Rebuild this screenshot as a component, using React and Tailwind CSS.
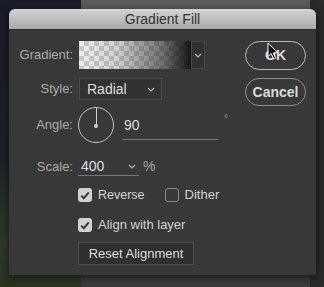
import React from "react";

function Chevron({ className = "" }) {
  return (
    <svg width="8" height="5" viewBox="0 0 8 5" className={className}>
      <path d="M1 1 L4 4 L7 1" fill="none" stroke="#b5b5b5" strokeWidth="1.2" />
    </svg>
  );
}

function CheckBox({ checked }) {
  return checked ? (
    <div className="w-[14px] h-[14px] rounded-[3px] bg-[#d2d2d2] flex items-center justify-center">
      <svg width="10" height="9" viewBox="0 0 10 9">
        <path d="M1.2 4.6 L3.8 7.2 L8.8 1.4" fill="none" stroke="#3a3a3a" strokeWidth="2" />
      </svg>
    </div>
  ) : (
    <div className="w-[14px] h-[14px] rounded-[3px] border border-[#8a8a8a]" />
  );
}

export default function App() {
  return (
    <div
      className="relative w-[324px] h-[287px] overflow-hidden flex"
      style={{ fontFamily: '"Liberation Sans", Arial, sans-serif' }}
    >
      {/* background desktop */}
      <div className="w-[81px] h-full bg-[linear-gradient(to_bottom,#1b1c29_0%,#1e2127_55%,#2f3a28_85%,#2a3322_100%)]" />
      <div className="w-[229px] h-full flex flex-col">
        <div className="h-[40px] bg-[#5b5b5b]" />
        <div className="flex-1 bg-[#3b3b3b]" />
      </div>
      <div className="flex-1 h-full bg-[#2a2a2a]" />

      {/* dialog */}
      <div className="absolute left-[9px] top-[9px] w-[307px] h-[266px] rounded-t-[6px] bg-[#383838] shadow-[0_2px_8px_rgba(0,0,0,0.6)] flex flex-col overflow-hidden">
        <div className="h-[21px] bg-[linear-gradient(to_bottom,#d4d4d4,#a9a9a9)] flex items-center justify-center text-[14px] text-[#333] border-b border-[#2e2e2e]">
          Gradient Fill
        </div>
        <div className="flex flex-1">
          {/* form */}
          <div className="flex flex-col flex-1 text-[13px]">
            {/* gradient */}
            <div className="flex items-center mt-[11px] h-[28px]">
              <div className="w-[64px] text-right text-[#ababab]">Gradient:</div>
              <div className="ml-[6px] w-[112px] h-[28px] bg-[linear-gradient(to_right,rgba(28,28,28,0)_0%,rgba(28,28,28,0.15)_35%,rgba(28,28,28,0.6)_75%,rgba(15,15,15,0.97)_100%),repeating-conic-gradient(#c9c9c9_0_25%,#efefef_0_50%)] bg-[length:100%_100%,10px_10px]" />
              <div className="w-[14px] h-[28px] border border-[#4a4a4a] bg-[#303030] flex items-center justify-center">
                <Chevron />
              </div>
            </div>
            {/* style */}
            <div className="flex items-center mt-[9px] h-[22px]">
              <div className="w-[64px] text-right text-[#ababab]">Style:</div>
              <div className="ml-[6px] w-[83px] h-[22px] border border-[#4b4b4b] bg-[#323232] flex items-center justify-between pl-[7px] pr-[6px] text-[14px] text-[#dedede]">
                <span>Radial</span>
                <Chevron />
              </div>
            </div>
            {/* angle */}
            <div className="flex items-center mt-[8px] h-[34px]">
              <div className="w-[64px] text-right text-[#ababab]">Angle:</div>
              <div className="relative ml-[5px] w-[36px] h-[36px] rounded-full border border-[#c4c4c4]">
                <div className="absolute left-[16.5px] top-0 w-px h-[17px] bg-[#d0d0d0]" />
                <div className="absolute left-[15px] top-[15.5px] w-[4px] h-[4px] rounded-full bg-[#d0d0d0]" />
              </div>
              <div className="ml-[8px] w-[96px] h-[30px] border-b border-[#777] flex items-end pb-[3px] pl-[2px] text-[14px] text-[#dedede]">
                90
              </div>
              <div className="ml-[6px] self-start mt-[3px] text-[10px] text-[#999]">°</div>
            </div>
            {/* scale */}
            <div className="flex items-center mt-[15px] h-[19px]">
              <div className="w-[64px] text-right text-[#ababab]">Scale:</div>
              <div className="ml-[5px] w-[61px] h-[19px] border-b border-[#777] flex items-center justify-between pl-[3px] pr-[3px] text-[14px] text-[#dedede]">
                <span>400</span>
                <Chevron />
              </div>
              <div className="ml-[4px] text-[14px] text-[#ababab]">%</div>
            </div>
            {/* checkboxes */}
            <div className="flex items-center mt-[12px] h-[14px] pl-[69px] text-[12.5px] text-[#d4d4d4]">
              <CheckBox checked />
              <span className="ml-[6px]">Reverse</span>
              <div className="ml-[20px]">
                <CheckBox />
              </div>
              <span className="ml-[6px] text-[13px]">Dither</span>
            </div>
            <div className="flex items-center mt-[16px] h-[14px] pl-[69px] text-[13px] text-[#d4d4d4]">
              <CheckBox checked />
              <span className="ml-[6px]">Align with layer</span>
            </div>
            <div className="flex mt-[10px] pl-[69px]">
              <div className="w-[116px] h-[23px] border border-[#4e4e4e] bg-[#2f2f2f] flex items-center justify-center text-[#dcdcdc]">
                Reset Alignment
              </div>
            </div>
          </div>
          {/* buttons */}
          <div className="w-[61px] mr-[10px] pt-[11px] flex flex-col gap-[8px] text-[14px]">
            <div className="h-[29px] rounded-full border-[1.5px] border-[#bdbdbd] flex items-center justify-center text-[#dadada] font-bold">
              OK
            </div>
            <div className="h-[28px] rounded-full border border-[#8f8f8f] flex items-center justify-center text-[#dadada] font-bold">
              Cancel
            </div>
          </div>
        </div>
      </div>

      {/* mouse cursor */}
      <svg className="absolute left-[267px] top-[42px]" width="12" height="18" viewBox="0 0 12 18">
        <path d="M1 1 L1 14.5 L4.2 11.6 L6.6 17 L8.6 16.1 L6.3 10.9 L10.6 10.7 Z" fill="#111" stroke="#fff" strokeWidth="1" strokeLinejoin="round" />
      </svg>
    </div>
  );
}
